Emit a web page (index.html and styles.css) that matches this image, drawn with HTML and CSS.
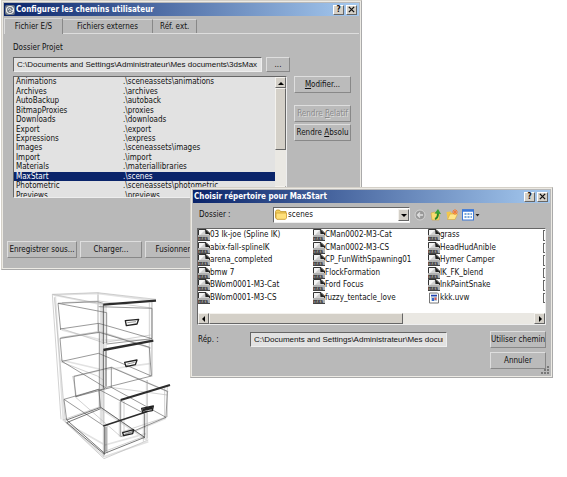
FILE: index.html
```html
<!DOCTYPE html>
<html lang="fr">
<head>
    <meta charset="UTF-8">
    <meta name="viewport" content="width=device-width, initial-scale=1.0">
    <title>Configurer les chemins utilisateur</title>
    <link rel="stylesheet" href="styles.css">
</head>
<body>
    <svg class="defs" aria-hidden="true">
        <symbol id="mxs" viewBox="0 0 12 12">
            <path d="M.5 .5H8L11.500 4V12H.5z" fill="#d0d0d0" stroke="#333"/>
            <path d="M1 1h6L2 6H1z" fill="#f4f4f4"/>
            <path d="M7 0L12 5H7.500z" fill="#222"/>
            <path d="M0 6h12v6H0z" fill="#b0b0b0"/>
            <path d="M0 11.500h12" stroke="#444"/>
            <text x="0" y="11" class="icon-text">mxs</text>
        </symbol>
        <symbol id="folder" viewBox="0 0 12 11">
            <path d="M.5 2.500L1.500 1h3l1 1.500h5.500v6L10 10H1.500L.5 8.500z" fill="#f3cf5c" stroke="#b98a20" stroke-width=".7"/>
            <path d="M1 4h10.500v5L10.500 10.300H2L1 9z" fill="#ffe07a" stroke="#c99a2c" stroke-width=".7"/>
        </symbol>
    </svg>

    <main class="desktop">
        <!-- Main window -->
        <section class="window paths">
            <header class="titlebar">
                <svg class="logo" viewBox="0 0 10 10"><rect width="10" height="10" rx="2" fill="#6c7684"/><circle cx="5" cy="5" r="3.500" fill="none" stroke="#eee" stroke-width="1.200"/><path d="M3 4.500q2-2 3 0t2 1M4 6q1 1 2 0" fill="none" stroke="#eee"/></svg>
                <h1>Configurer les chemins utilisateur</h1>
                <button class="caption" aria-label="Aide">?</button>
                <button class="caption" aria-label="Fermer"><svg viewBox="0 0 8 8"><path d="M1 1l6 6M7 1L1 7" stroke="#111" stroke-width="1.500"/></svg></button>
            </header>
            <nav class="tabs">
                <button class="tab active">Fichier E/S</button>
                <button class="tab external">Fichiers externes</button>
                <button class="tab">Réf. ext.</button>
            </nav>
            <div class="panel">
                <label class="panel-label" for="project">Dossier Projet</label>
                <div class="project-row">
                    <input class="field" type="text" id="project" value="C:\Documents and Settings\Administrateur\Mes documents\3dsMax">
                    <button class="btn browse">...</button>
                </div>
                <div class="paths-row">
                    <div class="listbox">
                        <ul class="path-list">
                            <li><span>Animations</span><span>.\sceneassets\animations</span></li>
                            <li><span>Archives</span><span>.\archives</span></li>
                            <li><span>AutoBackup</span><span>.\autoback</span></li>
                            <li><span>BitmapProxies</span><span>.\proxies</span></li>
                            <li><span>Downloads</span><span>.\downloads</span></li>
                            <li><span>Export</span><span>.\export</span></li>
                            <li><span>Expressions</span><span>.\express</span></li>
                            <li><span>Images</span><span>.\sceneassets\images</span></li>
                            <li><span>Import</span><span>.\import</span></li>
                            <li><span>Materials</span><span>.\materiallibraries</span></li>
                            <li class="selected"><span>MaxStart</span><span>.\scenes</span></li>
                            <li><span>Photometric</span><span>.\sceneassets\photometric</span></li>
                            <li><span>Previews</span><span>.\previews</span></li>
                        </ul>
                        <div class="vscroll">
                            <button class="arrow" aria-label="Haut"><svg viewBox="0 0 8 8"><path d="M1 6L4 3l3 3z"/></svg></button>
                            <div class="thumb"></div>
                            <div class="track"></div>
                            <button class="arrow" aria-label="Bas"><svg viewBox="0 0 8 8"><path d="M1 3l3 3 3-3z"/></svg></button>
                        </div>
                    </div>
                    <div class="side">
                        <button class="btn modify"><span><u>M</u>odifier...</span></button>
                        <button class="btn" disabled><span>Rendre <u>R</u>elatif</span></button>
                        <button class="btn"><span>Rendre <u>A</u>bsolu</span></button>
                    </div>
                </div>
            </div>
            <footer class="actions">
                <button class="btn save">Enregistrer sous...</button>
                <button class="btn load">Charger...</button>
                <button class="btn merge">Fusionner...</button>
            </footer>
        </section>

        <!-- Filing cabinet wireframe -->
        <svg class="cabinet" viewBox="0 0 450 570" fill="none" stroke-linejoin="round">
            <g stroke="#e2e2e2" stroke-width="5">
                <path d="M40 45L172 40 345 62M40 45L190 75M46 50L70 420M174 45V160M192 80V530M335 65V285M182 75V430M70 420L192 530 325 485M80 430L195 495 320 460M180 385L320 480M65 150L185 180 335 180M62 240L190 270 335 250M100 290L215 262 385 335M60 175L180 155 335 205M245 470L378 415M320 300V480"/>
            </g>
            <g stroke="#bbb" stroke-width="2">
                <path d="M37 43L172 38 348 58M37 43L188 72M37 43L63 418M43 52L76 425M174 38V160M198 78V325M190 75V530M186 80V430M336 65V290M328 68V288M62 145L190 188 332 165M66 68L176 63 336 84M62 245L172 288 190 300M64 172L178 155 330 202M68 420L180 380 315 474M75 425L192 536 325 480M192 515L310 470M107 352L240 468M238 365V470M252 362V470M382 318V410M374 320V415M322 300V475M245 456L382 410M212 322L382 345M310 390V485M98 288L110 352M202 435V520"/>
            </g>
            <g stroke="#666" stroke-width="2">
                <path d="M54 70L200 98V190M54 70L62 150M54 70L172 65 190 70M60 147L176 130 336 176M176 130V155M336 85V176L200 192M176 80L336 85M60 175L178 157 328 202M60 175L66 244 200 325M66 244L176 220 334 288M328 202L334 288 200 322M178 157V380M102 289L214 262 382 334M102 289L107 350M214 262V322L378 412M242 360V470L378 412 382 334M107 350L176 328 312 400M72 358L176 328M72 358L80 420M72 358L192 438M176 328L182 382M107 350L215 322M195 325L180 330"/>
            </g>
            <g stroke="#333" stroke-width="2">
                <path d="M80 420L182 382 314 472 194 520zM182 386L80 428 194 524M194 440V522M314 400V472M198 440V515M190 72V192M190 212V325M198 212V320"/>
            </g>
            <g stroke="#2c2c2c" stroke-width="7">
                <path d="M190 74L348 62M190 210L340 182M242 360L390 315"/>
                <path d="M190 438L320 395" stroke-width="5"/>
            </g>
            <g stroke="#222" stroke-width="4">
                <path d="M256 122l40-4-5 14-32 5zM254 247l37-7-5 14-28 6zM305 385l35-7-3 14-29 5zM248 458l33-9-3 12-27 6z"/>
                <path d="M308 390l30-7" stroke-width="8"/>
            </g>
            <path d="M262 128l26-3M262 252l22-5M256 461l20-6" stroke="#999" stroke-width="3"/>
        </svg>

        <!-- Folder chooser -->
        <section class="window chooser">
            <header class="titlebar">
                <h2>Choisir répertoire pour MaxStart</h2>
                <button class="caption" aria-label="Aide">?</button>
                <button class="caption" aria-label="Fermer"><svg viewBox="0 0 8 8"><path d="M1 1l6 6M7 1L1 7" stroke="#111" stroke-width="1.500"/></svg></button>
            </header>
            <div class="toolbar">
                <label for="folder-select">Dossier :</label>
                <div class="combo">
                    <select id="folder-select"><option>scenes</option></select>
                    <svg class="combo-folder"><use href="#folder"/></svg>
                    <span class="combo-arrow"><svg viewBox="0 0 8 8"><path d="M1 3l3 3 3-3z"/></svg></span>
                </div>
                <button class="tool" aria-label="Retour"><svg viewBox="0 0 12 12"><circle cx="6" cy="6" r="5" fill="#999" stroke="#d4d4d4"/><path d="M9 6H3.500M6 3.500L3.500 6 6 8.500" fill="none" stroke="#e0e0e0" stroke-width="1.300"/></svg></button>
                <button class="tool" aria-label="Dossier parent"><svg viewBox="0 0 12 12"><path d="M1 4l4-1 1 1h4L9 11H2z" fill="#f8dc70" stroke="#d0a53c" stroke-width=".6"/><path d="M5 10q3-1 3-6" fill="none" stroke="#268526" stroke-width="2"/><path d="M4.500 4.500L8 0l3 5z" fill="#36a236"/></svg></button>
                <button class="tool" aria-label="Nouveau dossier"><svg viewBox="0 0 12 12"><path d="M.5 3l4-.5 1 1.500h4L8.500 10H1.500z" fill="#f3c74c"/><path d="M1.500 10.500L4 5h7.500L9 10.500z" fill="#ffe68a" stroke="#d6a83c" stroke-width=".6"/><path d="M9 0v6M6 3h6M7 1l4 4M11 1L7 5" stroke="#f47b38"/></svg></button>
                <button class="tool view" aria-label="Affichage"><svg viewBox="0 0 18 12"><rect x=".5" y="1" width="11" height="10" fill="#fff" stroke="#3c79d8"/><path d="M0 1.500h12" stroke="#3c79d8" stroke-width="2.500"/><path d="M2.500 5h2M5.500 5h2M8.500 5h1.500M2.500 8h2M5.500 8h2M8.500 8h1.500" stroke="#4c8ad0" stroke-width="1.600"/><path d="M13.500 5h4l-2 2.500z" fill="#222"/></svg></button>
            </div>
            <div class="files">
                <ul class="file-grid">
                    <li><svg><use href="#mxs"/></svg>03 Ik-joe (Spline IK)</li>
                    <li><svg><use href="#mxs"/></svg>abix-fall-splineIK</li>
                    <li><svg><use href="#mxs"/></svg>arena_completed</li>
                    <li><svg><use href="#mxs"/></svg>bmw 7</li>
                    <li><svg><use href="#mxs"/></svg>BWom0001-M3-Cat</li>
                    <li><svg><use href="#mxs"/></svg>BWom0001-M3-CS</li>
                    <li><svg><use href="#mxs"/></svg>CMan0002-M3-Cat</li>
                    <li><svg><use href="#mxs"/></svg>CMan0002-M3-CS</li>
                    <li><svg><use href="#mxs"/></svg>CP_FunWithSpawning01</li>
                    <li><svg><use href="#mxs"/></svg>FlockFormation</li>
                    <li><svg><use href="#mxs"/></svg>Ford Focus</li>
                    <li><svg><use href="#mxs"/></svg>fuzzy_tentacle_love</li>
                    <li><svg><use href="#mxs"/></svg>grass</li>
                    <li><svg><use href="#mxs"/></svg>HeadHudAnible</li>
                    <li><svg><use href="#mxs"/></svg>Hymer Camper</li>
                    <li><svg><use href="#mxs"/></svg>IK_FK_blend</li>
                    <li><svg><use href="#mxs"/></svg>InkPaintSnake</li>
                    <li><svg viewBox="0 0 12 12"><path d="M1.500 1h8L10.500 2v9h-9z" fill="#fff" stroke="#777"/><path d="M3 3h6v6H3z" fill="#bcd"/><path d="M3 3.500h6" stroke="#2343b0" stroke-width="1.500"/><path d="M4 6h2v3H4z" fill="#3565c8"/><path d="M6.500 5.500h2V8h-2z" fill="#d05050"/></svg>kkk.uvw</li>
                    <!-- next column, scrolled out of view -->
                    <li class="page"></li>
                    <li class="page"></li>
                    <li class="page"></li>
                    <li class="page"></li>
                    <li class="page"></li>
                    <li class="page"></li>
                </ul>
                <div class="hscroll">
                    <button class="arrow" aria-label="Gauche"><svg viewBox="0 0 8 8"><path d="M5 1L2 4l3 3z"/></svg></button>
                    <div class="thumb"></div>
                    <div class="track"></div>
                    <button class="arrow" aria-label="Droite"><svg viewBox="0 0 8 8"><path d="M3 1l3 3-3 3z"/></svg></button>
                </div>
            </div>
            <div class="bottom">
                <label for="dir">Rép. :</label>
                <input class="field" type="text" id="dir" value="C:\Documents and Settings\Administrateur\Mes documents\3dsMax\scenes">
                <div class="confirm">
                    <button class="btn">Utiliser chemin</button>
                    <button class="btn">Annuler</button>
                </div>
            </div>
            <svg class="grip" viewBox="0 0 9 9"><path d="M6 1h2M3 4h2M6 4h2M0 7h2M3 7h2M6 7h2" stroke="#777" stroke-width="2"/></svg>
        </section>
    </main>
</body>
</html>
```

FILE: styles.css
```css
* {
    box-sizing: border-box;
}
body {
    margin: 0;
    background: #fff;
    color: #111;
    font: 8px/10px "DejaVu Sans Condensed", "DejaVu Sans", sans-serif;
}
button, input, select {
    font: inherit;
    color: inherit;
    margin: 0;
    padding: 0;
    border-radius: 0;
}
ul {
    list-style: none;
    margin: 0;
    padding: 0;
}
.defs {
    display: none;
}
.icon-text {
    font: bold 5px "Liberation Sans", Arial, sans-serif;
    fill: #111;
}
.desktop {
    position: relative;
    min-width: 560px;
    min-height: 470px;
}

/* Windows */
.window {
    position: absolute;
    background: #b9b9b9;
    border: 1px solid #d4d0c8;
    border-right-color: #aaa;
    border-bottom-color: #aaa;
    box-shadow: inset 0 0 0 1px #eceae4;
    padding: 2px;
}
.paths {
    left: 1px;
    top: 0;
    right: 205px;
}
.chooser {
    left: 190px;
    top: 187px;
    right: 14px;
}
.titlebar {
    display: flex;
    align-items: center;
    height: 13px;
    padding: 0 2px 0 1px;
    background: linear-gradient(to right, #0a246a, #a6caf0);
    color: #fff;
}
.titlebar h1, .titlebar h2 {
    flex: 1;
    margin: 0;
    font-size: 8px;
    line-height: 12px;
    white-space: nowrap;
}
.logo {
    width: 10px;
    height: 10px;
    margin-right: 1px;
}
.caption {
    display: flex;
    align-items: center;
    justify-content: center;
    width: 11px;
    height: 10px;
    margin-left: 2px;
    border: 1px solid #fff;
    border-right-color: #666;
    border-bottom-color: #666;
    background: #d4d0c8;
    color: #111;
    font-weight: bold;
}
.caption svg {
    width: 7px;
    height: 7px;
}

/* Tabs */
.tabs {
    display: flex;
    align-items: flex-end;
    height: 18px;
    padding-top: 2px;
    border-bottom: 1px solid #ddd;
}
.tab {
    height: 14px;
    padding: 0 7px;
    border: 1px solid #d8d8d8;
    border-right-color: #888;
    border-bottom: 0;
    border-left: 0;
    background: #b9b9b9;
    white-space: nowrap;
}
.tab.active {
    height: 16px;
    width: 59px;
    margin-bottom: -1px;
    border-left: 1px solid #ddd;
}
.tab.external {
    width: 90px;
}

/* Controls */
.btn {
    height: 17px;
    border: 1px solid #dedede;
    border-right-color: #888;
    border-bottom-color: #888;
    background: #bbb;
    white-space: nowrap;
}
.btn:disabled {
    color: #8c8c8c;
    text-shadow: 1px 1px #ddd;
}
.field {
    height: 15px;
    min-width: 0;
    padding: 0 3px;
    border: 1px solid #666;
    border-right-color: #eee;
    border-bottom-color: #eee;
    background: #e2e2e2;
    font-family: "Liberation Sans", Arial, sans-serif;
}
.panel {
    padding: 9px 8px 0 9px;
}
.panel-label {
    display: block;
}
.project-row {
    display: flex;
    gap: 4px;
    padding: 4px 61px 4px 0;
}
.project-row .field {
    flex: 1;
}
.browse {
    width: 24px;
    height: 15px;
}
.paths-row {
    display: flex;
    gap: 7px;
}
.listbox {
    flex: 1;
    display: flex;
    height: 122px;
    overflow: hidden;
    border: 1px solid #666;
    border-right-color: #eee;
    border-bottom-color: #eee;
    background: #e2e2e2;
}
.path-list {
    flex: 1;
    display: grid;
    grid-auto-rows: 1fr;
    height: 123px;
}
.path-list li {
    display: grid;
    grid-template-columns: 107px 1fr;
    align-items: center;
    padding-left: 2px;
    line-height: 9px;
}
.path-list .selected {
    background: #0a246a;
    color: #fff;
}
.side {
    display: flex;
    flex-direction: column;
    gap: 2px;
    width: 57px;
}
.modify {
    margin-bottom: 10px;
}
.actions {
    display: flex;
    gap: 3px;
    padding: 43px 3px 9px;
}
.save {
    width: 70px;
}
.load, .merge {
    width: 62px;
}

/* Scrollbars */
.vscroll, .hscroll {
    display: flex;
    background: #eae8e3;
}
.vscroll {
    flex-direction: column;
    width: 11px;
}
.hscroll {
    height: 11px;
}
.arrow, .thumb, .combo-arrow {
    border: 1px solid #f4f2ee;
    border-right-color: #666;
    border-bottom-color: #666;
    background: #d4d0c8;
}
.arrow {
    display: flex;
    align-items: center;
    justify-content: center;
    width: 11px;
    height: 11px;
}
.arrow svg, .combo-arrow svg {
    width: 8px;
    height: 8px;
    flex: none;
}
.track {
    flex: 1;
}
.vscroll .thumb {
    height: 62px;
}
.hscroll .thumb {
    width: 56%;
}

/* Folder chooser */
.toolbar {
    display: flex;
    align-items: center;
    padding: 4px 6px;
}
.toolbar label {
    width: 74px;
}
.combo {
    position: relative;
    width: 137px;
}
.combo select {
    display: block;
    width: 100%;
    height: 16px;
    padding-left: 14px;
    appearance: none;
    border: 1px solid #666;
    border-right-color: #eee;
    border-bottom-color: #eee;
    background: #fff;
}
.combo-folder {
    position: absolute;
    left: 2px;
    top: 2px;
    width: 12px;
    height: 11px;
    pointer-events: none;
}
.combo-arrow {
    position: absolute;
    right: 1px;
    top: 2px;
    display: flex;
    align-items: center;
    justify-content: center;
    width: 11px;
    height: 12px;
    pointer-events: none;
}
.tool {
    width: 12px;
    height: 12px;
    margin-left: 4px;
    border: 0;
    background: none;
}
.tool svg {
    display: block;
    width: 100%;
    height: 12px;
}
.tool.view {
    width: 18px;
}
.files {
    margin: 1px 4px 0;
    border: 1px solid #666;
    border-right-color: #eee;
    border-bottom-color: #eee;
    background: #fff;
}
.file-grid {
    display: grid;
    grid-auto-flow: column;
    grid-template-rows: repeat(6, 1fr);
    grid-template-columns: 1fr 1fr 1fr 2px;
    height: 75px;
    margin-bottom: 9px;
}
.file-grid li {
    display: flex;
    align-items: center;
    white-space: nowrap;
}
.file-grid svg {
    width: 12px;
    height: 12px;
    flex: none;
}
.file-grid .page {
    margin: 1px 0;
    border: 1px solid #666;
    border-right: 0;
}
.bottom {
    display: flex;
    padding: 6px 4px 6px 5px;
}
.bottom label {
    width: 52px;
    line-height: 17px;
}
.bottom .field {
    flex: 1;
    margin: 1px 43px 0 0;
}
.confirm {
    display: flex;
    flex-direction: column;
    gap: 4px;
    width: 56px;
}
.grip {
    position: absolute;
    right: 2px;
    bottom: 2px;
    width: 9px;
    height: 9px;
}

/* Cabinet drawing */
.cabinet {
    position: absolute;
    left: 40px;
    top: 280px;
    width: 150px;
    height: 190px;
}
```
